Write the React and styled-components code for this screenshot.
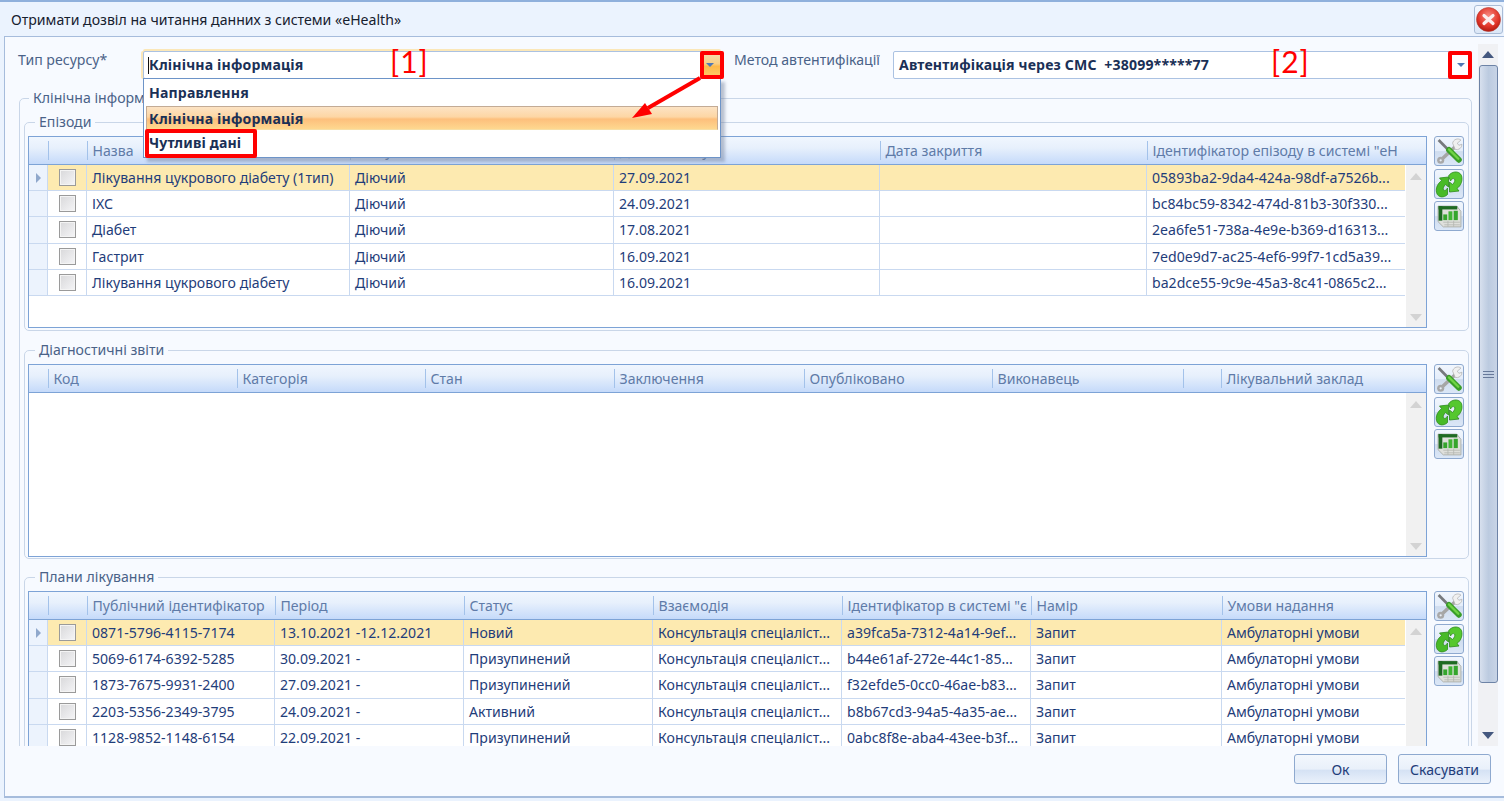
import React from 'react';
import styled, { createGlobalStyle } from 'styled-components';

const Global = createGlobalStyle`
  html, body { margin: 0; padding: 0; height: 100%; overflow: hidden; }
  body { font-family: "Noto Sans", "Open Sans", "Liberation Sans", sans-serif; font-size: 14.1px; color: #1e3a70; }
  * { box-sizing: border-box; }
`;

const Window = styled.div`
  position: relative; width: 1504px; height: 801px; background: #ebf3fe;
  border-top: 2px solid #8fb0dc; display: flex; flex-direction: column; overflow: hidden;
`;
const TitleBar = styled.header`
  height: 34px; flex: none; display: flex; align-items: center; justify-content: space-between;
  padding: 0 1px 0 11px; color: #16202e;
`;
const Title = styled.div``;
const CloseButton = styled.button`
  width: 29px; height: 29px; padding: 0; border: 1px solid #a9bcd6; border-radius: 3px;
  background: linear-gradient(#f4f8fe, #dbe7f7); display: flex; align-items: center; justify-content: center;
`;
const Panel = styled.main`
  margin-left: 4px; height: 762px; flex: none; background: #f7faff;
  border: 1px solid #a6bcdc; border-right: none; border-bottom: 2px solid #a6bcdc;
  display: flex; flex-direction: column; position: relative;
`;
const Body = styled.div`height: 709px; flex: none; display: flex; padding-top: 7px; overflow: hidden;`;
const Content = styled.div`width: 1473px; flex: none; height: 702px; overflow: hidden; padding: 0 5px 0 13px;`;
const FilterRow = styled.div`display: flex; height: 45px; padding-top: 7px;`;
const FilterLabel = styled.label`
  width: ${p => p.$w}px; flex: none; line-height: 18px; color: #4a6288;
`;
const Combo = styled.div`
  width: ${p => p.$w}px; height: 28px; flex: none; border: 1px solid #abc2e2; border-radius: 2px; background: #fff;
  display: flex; align-items: center; justify-content: space-between; font-weight: 700; color: #1a3056; letter-spacing: .15px;
  padding-left: ${p => p.$pad}px; margin-right: 13px;
  box-shadow: ${p => p.$focus ? '0 -2px 0 #fbe7b8, -2px 0 0 #fbe7b8' : 'none'};
`;
const ComboText = styled.span`flex: 1; white-space: pre; margin-top: -2px;`;
const Caret = styled.span`display: inline-block; width: 1px; height: 17px; background: #111;`;
const ComboButton = styled.span`
  width: 20px; height: 100%; display: flex; align-items: center; justify-content: center;
  background: ${p => p.$active ? 'linear-gradient(#f5dfb4, #f9cf85 45%, #fdb94a 55%, #fece6e)' : 'transparent'};
`;
const ArrowDown = styled.span`
  width: 0; height: 0; border-left: 4px solid transparent; border-right: 4px solid transparent; border-top: 4px solid #4f78b5;
`;

const Group = styled.fieldset`
  margin: ${p => p.$mt || 0}px ${p => p.$mx || 0}px ${p => p.$mb || 0}px ${p => p.$mx || 0}px; min-width: 0; border: 1px solid #c9d6e8; border-radius: 5px;
  padding: ${p => p.$pad}; ${p => p.$h ? `height: ${p.$h}px;` : ''}
`;
const Legend = styled.legend`
  margin-left: ${p => p.$ml}px; padding: 0 4px; line-height: 18px; height: 18px; color: #4a6288;
`;
const GridWrap = styled.div`display: flex; align-items: flex-start; gap: 7px;`;
const Grid = styled.div`
  width: 1399px; height: ${p => p.$h}px; flex: none; border: 1px solid #7da3d6; background: #fff; display: flex; flex-direction: column; overflow: hidden;
`;
const HeaderRow = styled.div`
  height: 28px; flex: none; display: grid; grid-template-columns: ${p => p.$cols}; background: linear-gradient(#f0f6fe, #e7f0fc 40%, #c5dafa);
  border-bottom: 1px solid #7da3d6; align-items: center;
`;
const HeaderCell = styled.div`
  height: 19px; line-height: 19px; padding-left: 4.5px; color: #5f7ba8; white-space: nowrap; overflow: hidden;
  border-left: 1px solid #a3c2ea;
  &:first-child { border-left: none; }
`;
const GridBody = styled.div`flex: 1; display: flex; min-height: 0;`;
const Rows = styled.div`width: 1376px; flex: none;`;
const Row = styled.div`
  height: 26.2px; display: grid; grid-template-columns: ${p => p.$cols};
  background: ${p => p.$sel ? '#fdeab0' : '#fff'}; border-bottom: 1px solid #c9d9f0;
`;
const Indicator = styled.div`
  background: #ecf3fd; border-right: 1px solid #c9d9f0; display: flex; align-items: center; justify-content: center; padding-left: 1px;
  &::before { content: ''; display: ${p => p.$sel ? 'block' : 'none'}; border-left: 5px solid #8fa8cc; border-top: 5px solid transparent; border-bottom: 5px solid transparent; }
`;
const CheckCell = styled.div`
  border-right: 1px solid #c9d9f0; display: flex; align-items: center; justify-content: center;
`;
const Check = styled.span`
  width: 17px; height: 17px; border: 1px solid #9a9a9a; background: linear-gradient(135deg, #d8d8da, #f5f5f7);
  box-shadow: inset 0 0 0 1px #f4f4f4;
`;
const Cell = styled.div`
  padding: 0 3px 0 5px; line-height: 25px; border-right: 1px solid #c9d9f0; white-space: nowrap; overflow: hidden; color: #1f3d7a;
  &:last-child { border-right: none; }
`;
const VScroll = styled.div`
  width: 21px; margin-left: 1px; background: #f1f1f1; display: flex; flex-direction: column; align-items: center; justify-content: space-between; padding: 8px 0 6px;
`;
const Tri = styled.span`
  display: block; width: 0; height: 0; border-left: 6px solid transparent; border-right: 6px solid transparent;
  ${p => p.$down ? `border-top: 7px solid ${p.$c};` : `border-bottom: 7px solid ${p.$c};`}
`;
const Tools = styled.div`display: flex; flex-direction: column;`;
const Tool = styled.button`
  width: 30px; height: 30px; padding: 0; margin-bottom: ${p => p.$mb}px; border: 1px solid #8ea9cf; border-radius: 3px;
  background: linear-gradient(#f1f6fd, #e4edfa 50%, #cfdcee 52%, #dbe7f7); display: flex; align-items: center; justify-content: center;
`;
const MainScroll = styled.div`
  width: 20px; height: 702px; flex: none; background: #f0f1f4; display: flex; flex-direction: column; align-items: center; padding-top: 7px;
`;
const Thumb = styled.div`
  width: 19px; height: 618px; flex: none; margin: 7px 0 0; border: 1px solid #6d83a6; border-radius: 3px;
  background: linear-gradient(90deg, #d7e0ee, #bccbe0 50%, #c8d4e6); display: flex; align-items: center; justify-content: center;
`;
const Grip = styled.span`width: 11px; height: 7px; border-top: 1px solid #67799a; border-bottom: 1px solid #67799a; position: relative;
  &::after { content:''; position:absolute; left:0; right:0; top:2px; height:1px; background:#67799a; }
`;
const EndTri = styled.div`margin-top: 49px;`;
const Footer = styled.footer`flex: 1; display: flex; justify-content: flex-end; gap: 11px; padding: 8px 13px 0 0;`;
const FootButton = styled.button`
  width: 93px; height: 30px; font: inherit; color: #1f3d7a; border: 1px solid #8ea9cf; border-radius: 3px;
  background: linear-gradient(#f3f7fd, #e9f0fa 50%, #d5e2f4 55%, #eaf1fb);
`;

const Popup = styled.ul`
  position: absolute; left: 138px; top: 41px; width: 578px; height: 80px; margin: 0; padding: 1px;
  list-style: none; background: #fff; border: 1px solid #6d94c8; box-shadow: 4px 4px 3px rgba(110,125,150,.45);
  font-weight: 700; color: #1a3056; letter-spacing: .15px; z-index: 3;
`;
const PopItem = styled.li`
  height: ${p => p.$h}px; line-height: ${p => p.$h}px; padding-left: 4px;
  ${p => p.$hot && 'margin: 0 1px; padding-left: 2px; background: linear-gradient(#fce3c4, #fdd6a4 45%, #fdbf7c 55%, #fed88f); border: 1px solid #c3ab95; border-bottom-color: #f7dfa6; line-height: 23px;'}
`;
const RedBox = styled.div`
  position: absolute; left: ${p => p.$x}px; top: ${p => p.$y}px; width: ${p => p.$w}px; height: ${p => p.$h}px;
  border: 4px solid #f00; border-radius: 2px; z-index: 5;
`;
const Note = styled.div`
  position: absolute; left: ${p => p.$x}px; top: ${p => p.$y}px; color: #f00; font-family: "Lato", sans-serif; font-size: 30px; line-height: 30px; letter-spacing: 1px; z-index: 5;
`;
const ArrowSvg = styled.svg`position: absolute; left: 620px; top: 38px; z-index: 5;`;

const epCols = '19px 39px 263px 264px 266px 267px 257px';
const plCols = '19px 39px 188px 189px 189px 189px 189px 191px 182px';
const epHead = ['', '', 'Назва', 'Статус', 'Дата початку', 'Дата закриття', 'Ідентифікатор епізоду в системі "еН'];
const dgHead = ['', 'Код', 'Категорія', 'Стан', 'Заключення', 'Опубліковано', 'Виконавець', '', 'Лікувальний заклад'];
const dgCols = '19px 189px 188px 189px 190px 188px 191px 38px 183px';
const plHead = ['', '', 'Публічний ідентифікатор', 'Період', 'Статус', 'Взаємодія', 'Ідентифікатор в системі "є', 'Намір', 'Умови надання'];
const eps = [
  ['Лікування цукрового діабету (1тип)', 'Діючий', '27.09.2021', '', '05893ba2-9da4-424a-98df-a7526b...'],
  ['ІХС', 'Діючий', '24.09.2021', '', 'bc84bc59-8342-474d-81b3-30f330...'],
  ['Діабет', 'Діючий', '17.08.2021', '', '2ea6fe51-738a-4e9e-b369-d16313...'],
  ['Гастрит', 'Діючий', '16.09.2021', '', '7ed0e9d7-ac25-4ef6-99f7-1cd5a39...'],
  ['Лікування цукрового діабету', 'Діючий', '16.09.2021', '', 'ba2dce55-9c9e-45a3-8c41-0865c2...'],
];
const K = 'Консультація спеціаліст...';
const A = 'Амбулаторні умови';
const plans = [
  ['0871-5796-4115-7174', '13.10.2021 -12.12.2021', 'Новий', K, 'a39fca5a-7312-4a14-9ef...', 'Запит', A],
  ['5069-6174-6392-5285', '30.09.2021 -', 'Призупинений', K, 'b44e61af-272e-44c1-85...', 'Запит', A],
  ['1873-7675-9931-2400', '27.09.2021 -', 'Призупинений', K, 'f32efde5-0cc0-46ae-b83...', 'Запит', A],
  ['2203-5356-2349-3795', '24.09.2021 -', 'Активний', K, 'b8b67cd3-94a5-4a35-ae...', 'Запит', A],
  ['1128-9852-1148-6154', '22.09.2021 -', 'Призупинений', K, '0abc8f8e-aba4-43ee-b3f...', 'Запит', A],
];

const WrenchIcon = () => (
  <svg width="27" height="27" viewBox="0 0 26 26">
    <path d="M20 7 L5 21" stroke="#a6a6a6" strokeWidth="3.4" />
    <path d="M16 5 a5 5 0 0 1 8 -3 l-3.500 3 1.500 2 3-1 a5 5 0 0 1 -6.500 5z" fill="#f0f0f0" stroke="#b0b0b0" strokeWidth=".7" />
    <circle cx="4.500" cy="21.500" r="3.400" fill="#a8a8a8" />
    <circle cx="4.500" cy="21.500" r="1.100" fill="#e8eef6" />
    <path d="M2.500 2 L12 11.500" stroke="#76797c" strokeWidth="2.600" />
    <path d="M12.500 11.500 L22 21" stroke="#3a9e28" strokeWidth="5.600" strokeLinecap="round" />
    <path d="M12.500 11 L21.500 20" stroke="#70d445" strokeWidth="2.200" strokeLinecap="round" />
  </svg>
);
const RefreshIcon = () => (
  <svg width="29" height="29" viewBox="0 0 28 28">
    <path d="M13.500 5.500 C16 1 24 -0.500 26.500 5 C28 10 26 15 22 18 L24 20.500 L14.500 21.500 L14.500 11.500 L17.500 14 C19.500 12 20.500 9.500 19.500 8.500 C18 7.500 16.500 8.500 15.500 10.500 Z" fill="#55c82e" stroke="#2c8a1a" strokeWidth=".8" />
    <path d="M12.500 24 C9 27.500 3 27.500 1.500 22 C0.500 17 3 13 6.500 10 L4.500 7.500 L13.500 6.500 L13.500 16.500 L10.500 14 C8.500 16 7.500 18.500 8.500 19.500 C10 20.500 11.500 19.500 12.500 17.500 Z" fill="#48ba27" stroke="#2c8a1a" strokeWidth=".8" />
  </svg>
);
const TableIcon = () => (
  <svg width="27" height="27" viewBox="0 0 26 26">
    <path d="M2 3 H20 L24 8 V23 H7 L2 18 Z" fill="#dfe0dc" stroke="#a4a8a2" strokeWidth=".8" />
    <rect x="2.500" y="3" width="18" height="3.200" fill="#1e6a22" />
    <rect x="2.500" y="3" width="3.600" height="14" fill="#1e6a22" />
    <rect x="7" y="11" width="3.800" height="5.500" fill="#35a52c" />
    <rect x="12" y="8" width="3.800" height="8.500" fill="#40b534" />
    <rect x="17" y="7.500" width="4" height="9" fill="#35a52c" />
    <path d="M7 18.500 H23 M8 21 H23 M11.500 17 V23 M17 17 V23" stroke="#b4b8b2" strokeWidth=".8" />
  </svg>
);
const CloseIcon = () => (
  <svg width="25" height="25" viewBox="0 0 25 25">
    <defs>
      <radialGradient id="cl" cx="50%" cy="35%" r="70%"><stop offset="0" stopColor="#f78a80" /><stop offset=".6" stopColor="#e3382c" /><stop offset="1" stopColor="#a81208" /></radialGradient>
    </defs>
    <circle cx="12.5" cy="12.5" r="12" fill="url(#cl)" stroke="#b23a30" strokeWidth=".6" />
    <path d="M8 8.5 L17 16.5 M17 8.5 L8 16.5" stroke="#fbeeee" strokeWidth="3.2" strokeLinecap="round" />
  </svg>
);

const ToolColumn = () => (
  <Tools>
    <Tool $mb={3}><WrenchIcon /></Tool>
    <Tool $mb={2}><RefreshIcon /></Tool>
    <Tool $mb={0}><TableIcon /></Tool>
  </Tools>
);
const Head = ({ cols, labels }) => (
  <HeaderRow $cols={cols}>{labels.map((l, i) => <HeaderCell key={i}>{l}</HeaderCell>)}</HeaderRow>
);
const DataRow = ({ cols, cells, sel }) => (
  <Row $cols={cols} $sel={sel}>
    <Indicator $sel={sel} />
    <CheckCell><Check /></CheckCell>
    {cells.map((c, i) => <Cell key={i}>{c}</Cell>)}
  </Row>
);
const Scroll = () => (
  <VScroll><Tri $c="#d3d3d3" /><Tri $down $c="#d3d3d3" /></VScroll>
);

export default function App() {
  return (
    <Window>
      <Global />
      <TitleBar>
        <Title>Отримати дозвіл на читання данних з системи «eHealth»</Title>
        <CloseButton aria-label="close"><CloseIcon /></CloseButton>
      </TitleBar>
      <Panel>
        <Body>
          <Content>
            <FilterRow>
              <FilterLabel $w={125}>Тип ресурсу*</FilterLabel>
              <Combo $w={578} $pad={4} $focus>
                <Caret />
                <ComboText>Клінічна інформація</ComboText>
                <ComboButton $active><ArrowDown /></ComboButton>
              </Combo>
              <FilterLabel $w={159}>Метод автентифікації</FilterLabel>
              <Combo $w={579} $pad={5}>
                <ComboText>Автентифікація через СМС  +38099*****77</ComboText>
                <ComboButton><ArrowDown /></ComboButton>
              </Combo>
            </FilterRow>
            <Group $pad="0 2px 0 4px" $mx={1}>
              <Legend $ml={5}>Клінічна інформація</Legend>
              <Group $pad="5px 5px 3px 3px" $h={218} $mt={6} $mb={10}>
                <Legend $ml={7}>Епізоди</Legend>
                <GridWrap>
                  <Grid $h={192}>
                    <Head cols={epCols} labels={epHead} />
                    <GridBody>
                      <Rows>{eps.map((r, i) => <DataRow key={i} cols={epCols} cells={r} sel={i === 0} />)}</Rows>
                      <Scroll />
                    </GridBody>
                  </Grid>
                  <ToolColumn />
                </GridWrap>
              </Group>
              <Group $pad="5px 5px 3px 3px" $h={218} $mb={9}>
                <Legend $ml={7}>Діагностичні звіти</Legend>
                <GridWrap>
                  <Grid $h={193}>
                    <Head cols={dgCols} labels={dgHead} />
                    <GridBody>
                      <Rows />
                      <Scroll />
                    </GridBody>
                  </Grid>
                  <ToolColumn />
                </GridWrap>
              </Group>
              <Group $pad="5px 5px 3px 3px" $h={300}>
                <Legend $ml={7}>Плани лікування</Legend>
                <GridWrap>
                  <Grid $h={193}>
                    <Head cols={plCols} labels={plHead} />
                    <GridBody>
                      <Rows>{plans.map((r, i) => <DataRow key={i} cols={plCols} cells={r} sel={i === 0} />)}</Rows>
                      <Scroll />
                    </GridBody>
                  </Grid>
                  <ToolColumn />
                </GridWrap>
              </Group>
            </Group>
          </Content>
          <MainScroll>
            <Tri $c="#44587f" />
            <Thumb><Grip /></Thumb>
            <EndTri><Tri $down $c="#44587f" /></EndTri>
          </MainScroll>
        </Body>
        <Footer>
          <FootButton>Ок</FootButton>
          <FootButton>Скасувати</FootButton>
        </Footer>
        <Popup>
          <PopItem $h={26}>Направлення</PopItem>
          <PopItem $h={24} $hot>Клінічна інформація</PopItem>
          <PopItem $h={26}>Чутливі дані</PopItem>
        </Popup>
        <RedBox $x={695} $y={14} $w={24} $h={28} />
        <RedBox $x={140} $y={92} $w={112} $h={29} />
        <RedBox $x={1443} $y={14} $w={24} $h={28} />
        <Note $x={385} $y={9}>[1]</Note>
        <Note $x={1266} $y={9}>[2]</Note>
        <ArrowSvg width="90" height="50" viewBox="0 0 90 50">
          <path d="M75 3 L23 33" stroke="#f00" strokeWidth="4" />
          <path d="M7 43 L20 28 L27 39 Z" fill="#f00" />
        </ArrowSvg>
      </Panel>
    </Window>
  );
}
